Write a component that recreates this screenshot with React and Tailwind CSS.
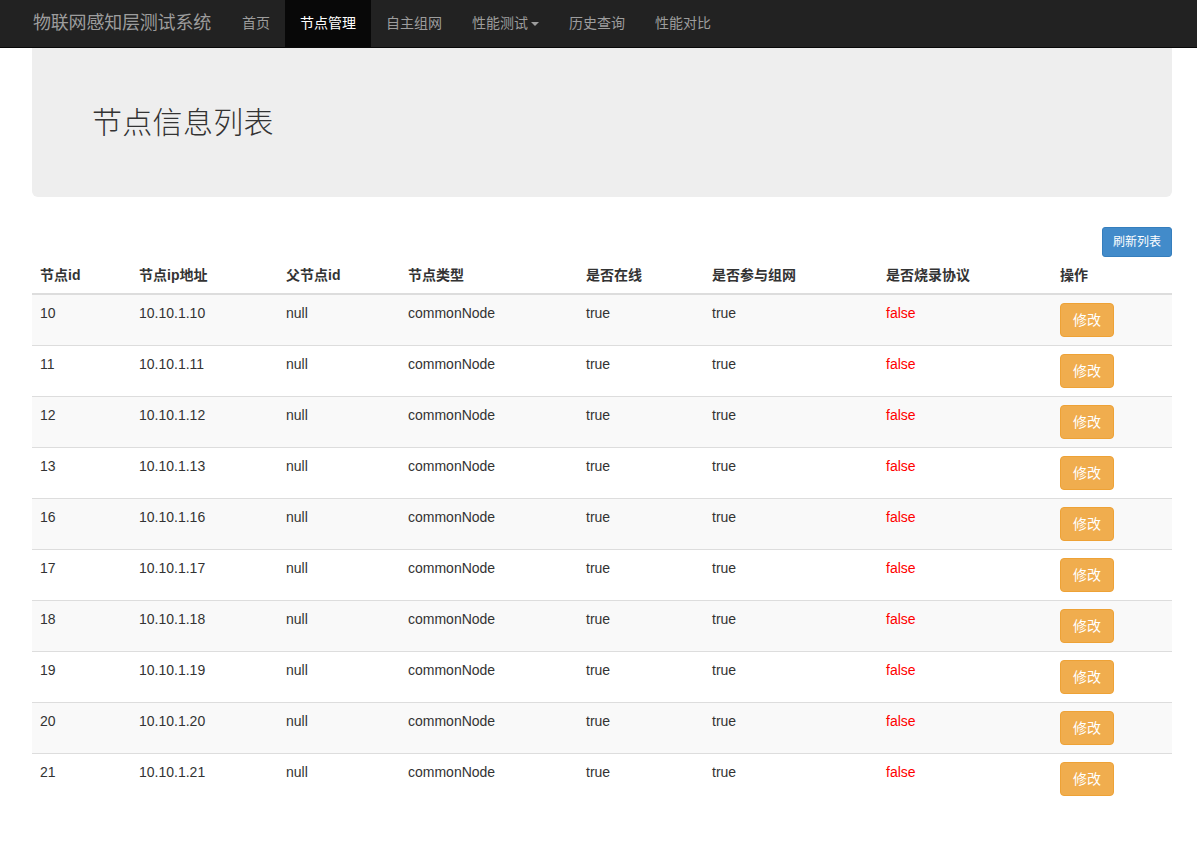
import React from 'react';

const font = { fontFamily: '"Liberation Sans", "Noto Sans CJK SC", sans-serif' };

const navItems = ['首页', '节点管理', '自主组网', '性能测试', '历史查询', '性能对比'];

const cols = [
  { label: '节点id', w: 'w-[99px]' },
  { label: '节点ip地址', w: 'w-[147px]' },
  { label: '父节点id', w: 'w-[122px]' },
  { label: '节点类型', w: 'w-[178px]' },
  { label: '是否在线', w: 'w-[126px]' },
  { label: '是否参与组网', w: 'w-[174px]' },
  { label: '是否烧录协议', w: 'w-[174px]' },
  { label: '操作', w: 'w-[120px]' },
];

const ids = [10, 11, 12, 13, 16, 17, 18, 19, 20, 21];

export default function App() {
  return (
    <div className="min-h-[844px] bg-white text-[14px] text-[#333]" style={font}>
      {/* Navbar */}
      <nav className="h-[48px] bg-[#222] border-b border-[#080808]">
        <div className="flex h-[47px] items-center pl-[33px]">
          <span
            className="w-[194px] shrink-0 whitespace-nowrap text-[18px] tracking-[-0.2px] text-[#9d9d9d]"
            style={{ fontFamily: '"Liberation Serif", "Noto Sans CJK SC", serif' }}
          >
            物联网感知层测试系统
          </span>
          <ul className="flex h-full">
            {navItems.map((item) => (
              <li
                key={item}
                className={
                  item === '节点管理'
                    ? 'flex items-center h-full px-[15px] bg-[#080808] text-white'
                    : 'flex items-center h-full px-[15px] text-[#9d9d9d]'
                }
              >
                {item}
                {item === '性能测试' && (
                  <span className="ml-[3px] inline-block w-0 h-0 border-l-[4px] border-r-[4px] border-t-[4px] border-l-transparent border-r-transparent border-t-[#9d9d9d]" />
                )}
              </li>
            ))}
          </ul>
        </div>
      </nav>

      <div className="w-[1140px] ml-[32px]">
        {/* Jumbotron */}
        <div className="h-[149px] bg-[#eee] rounded-b-[6px] pl-[60px] flex items-center">
          <h1 className="text-[30px] font-light text-[#333] tracking-[0.3px]" style={{ fontFamily: '"Liberation Serif", "Noto Sans CJK SC", serif' }}>
            节点信息列表
          </h1>
        </div>

        <div className="flex justify-end mt-[30px]">
          <button className="h-[30px] px-[10px] text-[12px] text-white bg-[#428bca] border border-[#357ebd] rounded-[3px]">
            刷新列表
          </button>
        </div>

        {/* Table */}
        <table className="w-full border-collapse table-fixed">
          <thead>
            <tr className="border-b-2 border-[#ddd]">
              {cols.map((c) => (
                <th key={c.label} className={`${c.w} text-left font-bold px-[8px] py-[8px] leading-[20px]`}>
                  {c.label}
                </th>
              ))}
            </tr>
          </thead>
          <tbody>
            {ids.map((id, i) => (
              <tr
                key={id}
                className={`${i % 2 === 0 ? 'bg-[#f9f9f9]' : 'bg-white'} ${i < ids.length - 1 ? 'border-b border-[#ddd]' : ''}`}
              >
                <td className="align-top p-[8px] leading-[20px]">{id}</td>
                <td className="align-top p-[8px] leading-[20px]">10.10.1.{id}</td>
                <td className="align-top p-[8px] leading-[20px]">null</td>
                <td className="align-top p-[8px] leading-[20px]">commonNode</td>
                <td className="align-top p-[8px] leading-[20px]">true</td>
                <td className="align-top p-[8px] leading-[20px]">true</td>
                <td className="align-top p-[8px] leading-[20px] text-[#ff0000]">false</td>
                <td className="align-top p-[8px] leading-[20px]">
                  <button className="h-[34px] w-[54px] text-[14px] text-white bg-[#f0ad4e] border border-[#eea236] rounded-[4px]">
                    修改
                  </button>
                </td>
              </tr>
            ))}
          </tbody>
        </table>
      </div>
    </div>
  );
}
